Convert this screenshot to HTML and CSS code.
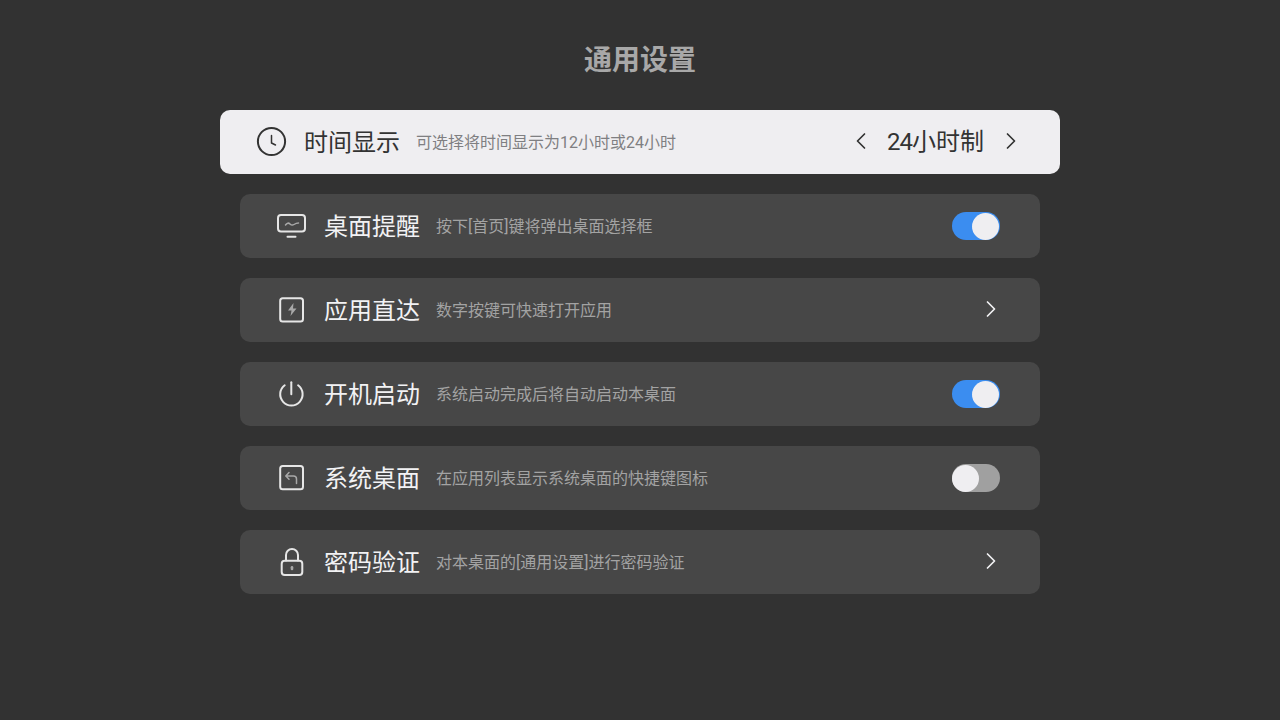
FILE: index.html
```html
<!DOCTYPE html>
<html lang="zh">
<head>
<meta charset="utf-8">
<title>通用设置</title>
<link rel="stylesheet" href="styles.css">
</head>
<body>
<h1 class="title">通用设置</h1>
<div class="list">
  <div class="row row-focus">
    <span class="icon">
      <svg viewBox="0 0 36 36" width="36" height="36" fill="none" stroke="currentColor" stroke-width="2" stroke-linecap="round" stroke-linejoin="round"><circle cx="17.500" cy="17.500" r="13.600"/><path d="M17.500 11.500v7.500l4 2" stroke-width="1.500"/></svg>
    </span>
    <span class="name">时间显示</span>
    <span class="desc">可选择将时间显示为12小时或24小时</span>
    <span class="picker">
      <svg class="chev" viewBox="0 0 20 20" width="20" height="20" fill="none" stroke="currentColor" stroke-width="1.700" stroke-linecap="round" stroke-linejoin="round"><path d="M13.500 2 6.500 9l7 7"/></svg>
      <span class="value"><span class="num">24</span>小时制</span>
      <svg class="chev" viewBox="0 0 20 20" width="20" height="20" fill="none" stroke="currentColor" stroke-width="1.700" stroke-linecap="round" stroke-linejoin="round"><path d="M7.500 2 14.500 9l-7 7"/></svg>
    </span>
  </div>
  <div class="row">
    <span class="icon">
      <svg viewBox="0 0 36 36" width="36" height="36" fill="none" stroke="currentColor" stroke-width="2" stroke-linecap="round" stroke-linejoin="round"><rect x="4" y="7" width="27" height="16.500" rx="3"/><path d="M13.500 28.700h8"/><path class="soft" d="M11.500 17c1.500-2 3-2.500 4.500-1s2.500 1.500 4 .5 3-1.500 4.500-1.500" stroke-width="1.500"/></svg>
    </span>
    <span class="name">桌面提醒</span>
    <span class="desc">按下[首页]键将弹出桌面选择框</span>
    <span class="toggle toggle-on"><span class="knob"></span></span>
  </div>
  <div class="row">
    <span class="icon">
      <svg viewBox="0 0 36 36" width="36" height="36" fill="none" stroke="currentColor" stroke-width="2" stroke-linecap="round" stroke-linejoin="round"><rect x="6.200" y="6.200" width="22.800" height="23.200" rx="2.500"/><path class="bolt" d="M19.500 11 14 18.500h3.500L16.500 24l6-7.500H19z"/></svg>
    </span>
    <span class="name">应用直达</span>
    <span class="desc">数字按键可快速打开应用</span>
    <svg class="chev end" viewBox="0 0 20 20" width="20" height="20" fill="none" stroke="currentColor" stroke-width="1.700" stroke-linecap="round" stroke-linejoin="round"><path d="M7.500 2 14.500 9l-7 7"/></svg>
  </div>
  <div class="row">
    <span class="icon">
      <svg viewBox="0 0 36 36" width="36" height="36" fill="none" stroke="currentColor" stroke-width="2" stroke-linecap="round" stroke-linejoin="round"><path d="M17.300 6.200v12"/><path d="M10.700 9.300a11.200 11.200 0 1 0 13.400 0"/></svg>
    </span>
    <span class="name">开机启动</span>
    <span class="desc">系统启动完成后将自动启动本桌面</span>
    <span class="toggle toggle-on"><span class="knob"></span></span>
  </div>
  <div class="row">
    <span class="icon">
      <svg viewBox="0 0 36 36" width="36" height="36" fill="none" stroke="currentColor" stroke-width="2" stroke-linecap="round" stroke-linejoin="round"><rect x="6.200" y="6" width="22.800" height="23.200" rx="2.500"/><path class="soft" d="M15 12.500 11.800 16l3.200 3.200M12 16h7.500a3 3 0 0 1 3 3v4.500" stroke-width="1.500"/></svg>
    </span>
    <span class="name">系统桌面</span>
    <span class="desc">在应用列表显示系统桌面的快捷键图标</span>
    <span class="toggle"><span class="knob"></span></span>
  </div>
  <div class="row">
    <span class="icon">
      <svg viewBox="0 0 36 36" width="36" height="36" fill="none" stroke="currentColor" stroke-width="2" stroke-linecap="round" stroke-linejoin="round"><rect x="7.700" y="16.700" width="20.600" height="14.200" rx="3"/><path d="M12 16.500v-5.500a6 6 0 0 1 12 0v5.500"/><path class="soft" d="M18 23.200v1.800" stroke-width="2.600"/></svg>
    </span>
    <span class="name">密码验证</span>
    <span class="desc">对本桌面的[通用设置]进行密码验证</span>
    <svg class="chev end" viewBox="0 0 20 20" width="20" height="20" fill="none" stroke="currentColor" stroke-width="1.700" stroke-linecap="round" stroke-linejoin="round"><path d="M7.500 2 14.500 9l-7 7"/></svg>
  </div>
</div>
</body>
</html>
```
FILE: styles.css
```css
* { box-sizing: border-box; }
html, body { margin: 0; height: 720px; overflow: hidden; }
body {
  background: #323232;
  font-family: Roboto, "Noto Sans CJK SC", sans-serif;
  color: #e8e8ea;
  padding-top: 41px;
}
.title {
  margin: 0;
  height: 40px;
  line-height: 40px;
  text-align: center;
  font-size: 28px;
  font-weight: 700;
  color: #a8a8a8;
}
.list {
  margin-top: 29px;
  display: flex;
  flex-direction: column;
  gap: 20px;
  align-items: center;
}
.row {
  width: 800px;
  height: 64px;
  padding: 0 40px 0 34px;
  display: flex;
  align-items: center;
  background: #474747;
  border-radius: 10px;
  color: #f2f2f4;
}
.row-focus {
  width: 840px;
  background: #efeef1;
  color: #333333;
}
.icon { width: 36px; height: 36px; display: flex; flex: none; color: #e6e6e6; }
.row-focus .icon { color: #333333; }
.soft { stroke: #a8a8a8; }
.bolt { stroke: none; fill: #a8a8a8; }
.name {
  margin-left: 14px;
  padding-top: 1px;
  font-size: 24px;
  line-height: 32px;
  white-space: nowrap;
}
.desc {
  margin-left: 16px;
  padding-top: 1px;
  font-size: 16px;
  line-height: 24px;
  color: #a3a3a3;
  white-space: nowrap;
}
.row-focus .desc { color: #7f7f82; }
.picker {
  margin-left: auto;
  display: flex;
  align-items: center;
  gap: 16px;
}
.value { font-size: 24px; line-height: 32px; white-space: nowrap; }
.num { letter-spacing: -1px; }
.chev { flex: none; display: block; }
.end { margin-left: auto; }
.toggle {
  margin-left: auto;
  width: 48px;
  height: 28px;
  padding: 0.5px 1px 0.5px 0;
  border-radius: 14px;
  background: #a0a0a0;
  display: flex;
  justify-content: flex-start;
}
.toggle-on { background: #3b8df0; justify-content: flex-end; }
.knob { width: 27px; height: 27px; border-radius: 50%; background: #efeef1; }
```
